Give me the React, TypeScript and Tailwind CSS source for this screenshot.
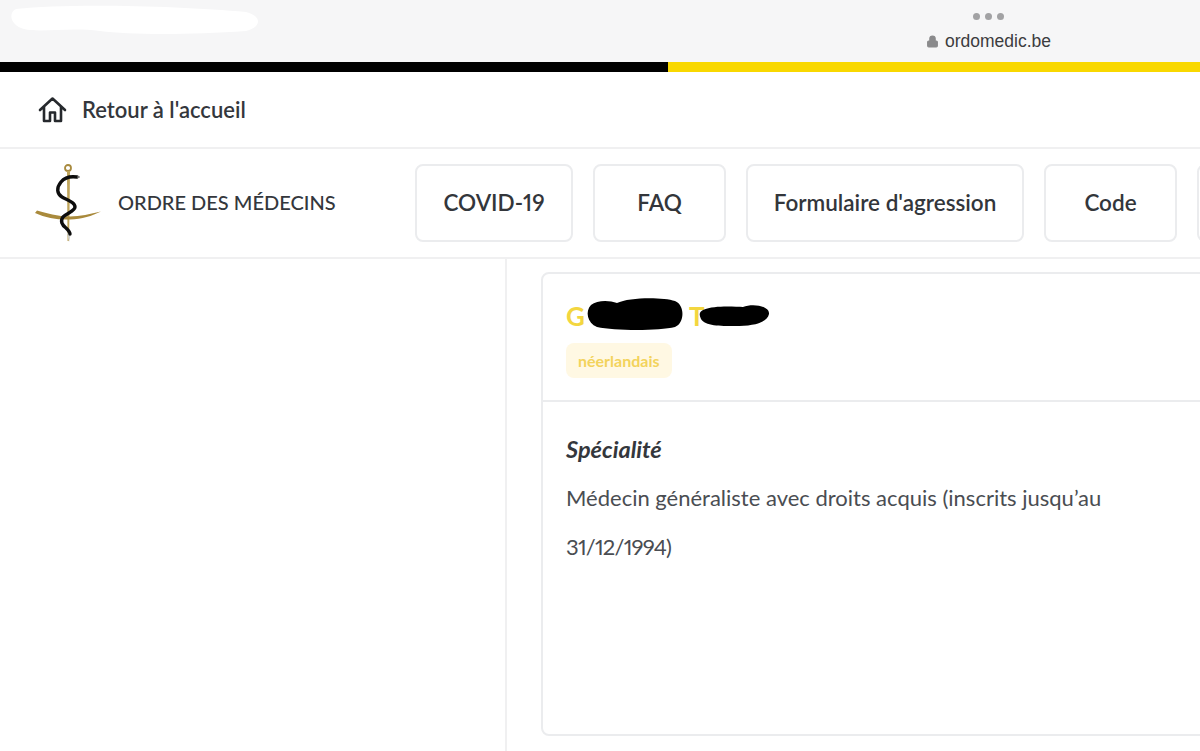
import { Lock } from 'lucide-react'

const navItems = [
  { label: 'COVID-19', width: 'w-[158px]' },
  { label: 'FAQ', width: 'w-[133px]' },
  { label: "Formulaire d'agression", width: 'w-[278px]' },
  { label: 'Code', width: 'w-[133px]' },
  { label: '', width: 'w-[133px]' },
]

function HomeIcon() {
  return (
    <svg width="29" height="27" viewBox="0 0 29 27" fill="none" className="shrink-0">
      <path
        d="M2 14 L14.5 2.5 L27 14 M6 11 V25 H12 V16.5 H17 V25 H23 V11"
        stroke="#26292d"
        strokeWidth="2.6"
        strokeLinejoin="round"
        strokeLinecap="round"
      />
    </svg>
  )
}

function Logo() {
  return (
    <svg width="68" height="82" viewBox="0 0 68 82" fill="none" className="mt-[2px] shrink-0">
      <circle cx="34" cy="5" r="3" stroke="#a88a3e" strokeWidth="1.8" />
      <path d="M33 8 L36 8 L35.5 50 L35 78 L33.5 78 Z" fill="#bfa45a" />
      <path d="M33 70 L37 70 L35 79 Z" fill="#cfcfc8" />
      <path
        d="M1 50 C12 55 24 57 36 56.5 C48 56 58 53 67 48.5 C56 51 46 53.5 36 53.5 C24 53.5 12 50 3 47.5 Z"
        fill="#a98a3c"
      />
      <path
        d="M43 14 C36 13 31 14 27 19 C22 25 23 31 28 34 C33 37 41 39 41 44 C41 48 33 50 29 54 C26 58 28 62 32 65 C34 67 36 69 36 71"
        stroke="#0d0d0d"
        strokeWidth="3.4"
        strokeLinecap="round"
      />
      <path d="M43 14 L46 14" stroke="#777" strokeWidth="1.2" />
    </svg>
  )
}

export default function App() {
  return (
    <div className="flex h-[751px] w-[1200px] flex-col overflow-hidden bg-white font-['Lato',sans-serif] text-[#2f3237]">
      <div className="relative flex h-[62px] shrink-0 justify-end bg-[#f6f6f7] pr-[149px]">
        {/* painted over in the screenshot */}
        <svg width="250" height="32" viewBox="0 0 250 32" className="absolute left-[10px] top-[3px]">
          <path d="M6 6 C60 0 170 3 236 9 C252 13 252 24 236 28 C180 32 120 32 90 28 C60 24 30 30 14 26 C0 22 -2 10 6 6 Z" fill="#ffffff" />
        </svg>
        <div className="flex flex-col items-center pt-[13px]">
          <div className="flex gap-[5px]">
            <span className="h-[7px] w-[7px] rounded-full bg-[#a2a2a4]" />
            <span className="h-[7px] w-[7px] rounded-full bg-[#a2a2a4]" />
            <span className="h-[7px] w-[7px] rounded-full bg-[#a2a2a4]" />
          </div>
          <div className="mt-[12px] flex items-center gap-[6px] font-['Liberation_Sans',sans-serif] text-[17.5px] leading-[19px] text-[#3c3c3e]">
            <Lock size={13} fill="#8a8a8c" stroke="#8a8a8c" />
            <span>ordomedic.be</span>
          </div>
        </div>
      </div>

      <div className="flex h-[10px] shrink-0">
        <div className="w-[668px] bg-black" />
        <div className="flex-1 bg-[#f9d800]" />
      </div>

      <div className="flex h-[77px] shrink-0 items-center gap-[15px] border-b-2 border-[#f0f0f1] pl-[38px]">
        <HomeIcon />
        <span className="text-[22px] font-semibold text-[#34373c]">Retour à l'accueil</span>
      </div>

      <div className="flex h-[110px] shrink-0 items-center border-b-2 border-[#f0f0f1] pl-[34px]">
        <Logo />
        <span className="mb-[3px] ml-[16px] w-[297px] shrink-0 text-[20px] font-medium text-[#34373c]">ORDRE DES MÉDECINS</span>
        <div className="flex shrink-0 gap-[20px]">
          {navItems.map((item, i) => (
            <div
              key={i}
              className={`flex h-[78px] shrink-0 items-center justify-center rounded-lg border-2 border-[#ebecee] text-[22.5px] font-semibold proportional-nums text-[#33363b] ${item.width}`}
            >
              {item.label}
            </div>
          ))}
        </div>
      </div>

      <div className="flex min-h-0 flex-1">
        <div className="w-[507px] shrink-0 border-r-2 border-[#f0f0f1]" />
        <div className="min-w-0 flex-1 pb-[15px] pl-[34px] pt-[13px]">
          <div className="h-full w-[720px] rounded-lg border-2 border-[#ebecee]">
            <div className="relative h-[128px] border-b-2 border-[#ebecee] pl-[23px] pt-[27px]">
              <div className="text-[26px] font-bold leading-[30px] text-[#f3d63f]">
                G<span className="ml-[104px]">T</span>
              </div>
              {/* names blacked out in the screenshot */}
              <svg width="190" height="34" viewBox="0 0 190 34" className="absolute left-[42px] top-[23px]">
                <path d="M6 8 C12 3 24 3 32 6 C44 0 78 0 90 4 C100 8 100 26 90 30 C74 34 30 34 12 30 C2 26 0 14 6 8 Z" fill="#000" />
                <path d="M118 13 C130 8 150 10 158 10 C168 6 185 9 184 17 C182 26 168 29 150 29 C135 29 120 29 116 22 C114 18 114 15 118 13 Z" fill="#000" />
              </svg>
              <span className="mt-[12px] inline-block rounded-lg bg-[#fff8e3] px-[12px] py-[7.5px] text-[16px] font-bold leading-[20px] text-[#f3d35c]">
                néerlandais
              </span>
            </div>
            <div className="pl-[23px] pt-[32px]">
              <p className="text-[23.5px] font-bold italic leading-[30px] text-[#34373c]">Spécialité</p>
              <p className="mt-[9px] w-[560px] text-[22px] leading-[49px] proportional-nums text-[#4a4d52]">
                Médecin généraliste avec droits acquis (inscrits jusqu’au <span className="tracking-[-0.8px]">31/12/1994)</span>
              </p>
            </div>
          </div>
        </div>
      </div>
    </div>
  )
}
